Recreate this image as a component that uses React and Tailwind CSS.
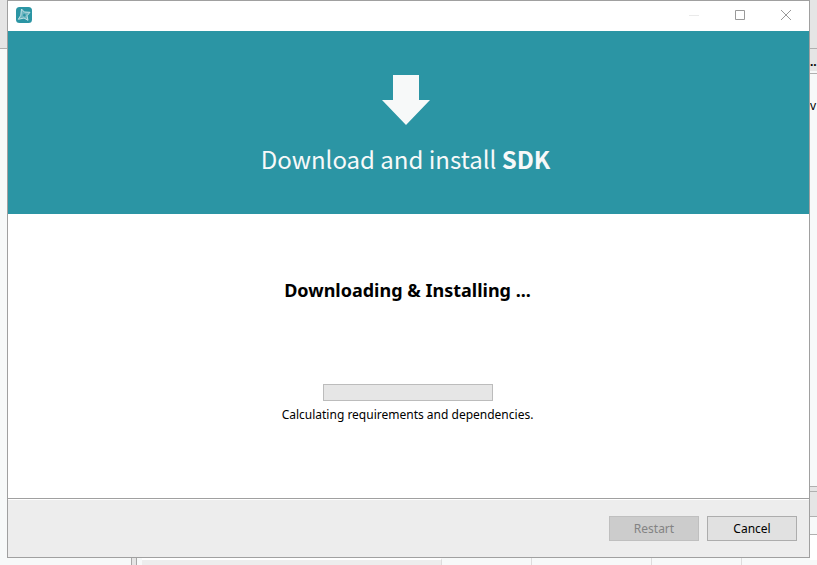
function TitleBar() {
  return (
    <div className="flex h-[30px] items-center justify-between bg-white pb-0.5">
      <svg className="ml-2 h-4 w-4" viewBox="0 0 16 16" role="img" aria-label="SDK">
        <rect width="16" height="16" rx="3.500" fill="#2b95a4" />
        <path d="M5.500 2 8.300 5 14 5.300 11 8.800 12 13.300 8 11 2.300 12.300 4.800 8.300Z" fill="#6db5c0" stroke="#c3e2e6" strokeWidth="1" />
        <path d="M8 6.500 10 8 8.500 9.800 6.800 8.300Z" fill="#2b95a4" />
      </svg>
      <div className="flex text-[#999]">
        <button type="button" disabled aria-label="Minimize" className="flex h-7 w-[46px] items-center justify-center text-[#eaeaea]">
          <svg width="10" height="10" stroke="currentColor"><path d="M0 5.500H10" /></svg>
        </button>
        <button type="button" aria-label="Maximize" className="flex h-7 w-[46px] items-center justify-center">
          <svg width="10" height="10" fill="none" stroke="currentColor"><path d="M.5.5H9.500V9.500H.5Z" /></svg>
        </button>
        <button type="button" aria-label="Close" className="flex h-7 w-[46px] items-center justify-center">
          <svg width="10" height="10" stroke="currentColor"><path d="M0 0 10 10M10 0 0 10" /></svg>
        </button>
      </div>
    </div>
  );
}

function Banner() {
  return (
    <header className="flex h-[183px] shrink-0 flex-col items-center bg-[#2b95a4] pt-11 pr-1.5 text-[#f7f9f9]">
      <svg width="48" height="50" viewBox="0 0 48 50" fill="currentColor" aria-hidden="true">
        <path d="M11 0H37V25H48L24 50 0 25H11Z" />
      </svg>
      <h1 className="mt-4 font-['Noto_Sans_CJK_SC',sans-serif] text-2xl leading-9 whitespace-nowrap">
        Download and install <strong className="font-bold">SDK</strong>
      </h1>
    </header>
  );
}

function RightEdge() {
  return (
    <div className="flex w-[7px] shrink-0 flex-col overflow-hidden bg-[#f7f9f9] text-black" aria-hidden="true">
      <div className="h-[49px] border-b border-[#b0b0b0] bg-[#e5e5e5]" />
      <div className="h-[22px] bg-[#e5e5e5] text-xs leading-[26px] font-bold">..</div>
      <div className="h-[3px] border-b border-[#b0b0b0]" />
      <div className="pt-6 text-xs">v</div>
      <div className="flex-1" />
      <div className="h-[6px] border-y border-[#b0b0b0] bg-[#e5e5e5]" />
      <div className="h-[25px] border-b border-[#b0b0b0] bg-[#e5e5e5]" />
      <div className="h-[18px] border-b border-[#b0b0b0]" />
      <div className="mb-[5px] h-[25px] bg-white" />
    </div>
  );
}

function BottomEdge() {
  return (
    <div className="flex h-[7px] shrink-0 bg-[#f7f9f9]" aria-hidden="true">
      <div className="w-[124px]" />
      <div className="w-[6px] border-x border-[#a8a8a8] bg-[#e5e5e5]" />
      <div className="w-[5px]" />
      <div className="w-[300px] border-t-2 border-r border-white border-r-[#ddd] bg-[#ededed]" />
      <div className="w-[90px] border-r border-[#ddd]" />
      <div className="w-[120px] border-r border-[#ddd]" />
      <div className="w-[90px] border-r border-[#ddd]" />
    </div>
  );
}

export default function App() {
  return (
    <div className="flex min-h-screen bg-[#f7f9f9] font-['Noto_Sans','Open_Sans',sans-serif] text-black">
      <div className="w-[7px] shrink-0" aria-hidden="true">
        <div className="h-[49px] border-b border-[#b0b0b0] bg-[#e5e5e5]" />
      </div>
      <div className="flex min-w-0 flex-1 flex-col">
        <section className="flex flex-1 flex-col border border-[#a0a0a0] bg-white" role="dialog" aria-label="Download and install SDK">
          <TitleBar />
          <Banner />
          <main className="flex flex-1 flex-col items-center pt-16 pr-0.5">
            <h2 className="text-lg leading-6 font-bold">Downloading &amp; Installing ...</h2>
            <progress
              aria-labelledby="status"
              value="0"
              max="100"
              className="mt-[82px] h-[17px] w-[170px] appearance-none border border-[#bcbcbc] bg-[#e6e6e6] [&::-webkit-progress-bar]:bg-[#e6e6e6]"
            />
            <p id="status" className="mt-1 text-xs leading-5">Calculating requirements and dependencies.</p>
          </main>
          <footer className="border-t border-[#a0a0a0]">
            <div className="mt-px flex h-[57px] items-center justify-end gap-2 bg-[#ededed] px-3 text-xs">
              <button type="button" disabled className="h-[25px] w-[90px] border border-[#bfbfbf] bg-[#ccc] text-[#838383]">Restart</button>
              <button type="button" className="h-[25px] w-[90px] border border-[#adadad] bg-[#e1e1e1]">Cancel</button>
            </div>
          </footer>
        </section>
        <BottomEdge />
      </div>
      <RightEdge />
    </div>
  );
}
